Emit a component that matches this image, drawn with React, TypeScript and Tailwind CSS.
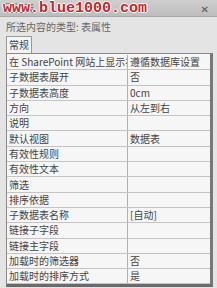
import React from "react";

const rows: [string, string][] = [
  ["在 SharePoint 网站上显示视图", "遵循数据库设置"],
  ["子数据表展开", "否"],
  ["子数据表高度", "0cm"],
  ["方向", "从左到右"],
  ["说明", ""],
  ["默认视图", "数据表"],
  ["有效性规则", ""],
  ["有效性文本", ""],
  ["筛选", ""],
  ["排序依据", ""],
  ["子数据表名称", "[自动]"],
  ["链接子字段", ""],
  ["链接主字段", ""],
  ["加载时的筛选器", "否"],
  ["加载时的排序方式", "是"],
];

export default function App() {
  return (
    <div
      className="w-[217px] h-[288px] overflow-hidden bg-[#e4e4e4] flex flex-col text-[#444]"
      style={{ fontFamily: '"Noto Sans CJK SC", "Liberation Sans", sans-serif' }}
    >
      {/* title bar */}
      <div className="relative h-[17px] shrink-0 bg-gradient-to-b from-[#cfcfcf] to-[#bdbdbd] border-b border-[#a8a8a8] flex items-center px-[4px]">
        <span className="text-[10px] leading-none text-[#666]">属性表</span>
        <span
          className="absolute left-[3px] top-[1px] text-[15px] leading-none font-bold text-[#c3262b]"
          style={{
            fontFamily: '"Liberation Mono", "DejaVu Sans Mono", monospace',
            textShadow:
              "1px 0 0 #fff, -1px 0 0 #fff, 0 1px 0 #fff, 0 -1px 0 #fff",
          }}
        >
          www.blue1000.com
        </span>
        <span
          className="ml-auto mr-[4px] mt-[4px] text-[10px] leading-none font-bold text-[#555]"
          style={{ fontFamily: '"DejaVu Sans", sans-serif' }}
        >
          ✕
        </span>
      </div>
      {/* selection type */}
      <div className="h-[19px] shrink-0 flex items-center px-[6px] text-[10px] leading-none text-[#666]">
        所选内容的类型: 表属性
      </div>
      {/* tab */}
      <div className="h-[17px] shrink-0 flex items-end px-[6px]">
        <div className="h-[17px] w-[26px] bg-[#f4f4f4] border border-b-0 border-[#9a9a9a] flex items-center justify-center text-[10px] leading-none text-[#444]">
          常规
        </div>
      </div>
      {/* table */}
      <div className="ml-[6px] w-[207px] bg-[#f6f6f6] border border-[#8a8a8a] border-r-[3px] border-r-[#777] border-b-[3px] border-b-[#6a6a6a] flex flex-col pt-[1px]">
        {rows.map(([k, v], i) => (
          <div
            key={i}
            className="h-[15.3px] flex border-b border-[#c4c4c4] text-[10px] leading-none"
          >
            <div className="w-[121px] shrink-0 border-r border-[#b0b0b0] flex items-center pl-[2px] overflow-hidden whitespace-nowrap">
              {k}
            </div>
            <div className="flex-1 flex items-center pl-[2px] overflow-hidden whitespace-nowrap">
              {v}
            </div>
          </div>
        ))}
      </div>
    </div>
  );
}
